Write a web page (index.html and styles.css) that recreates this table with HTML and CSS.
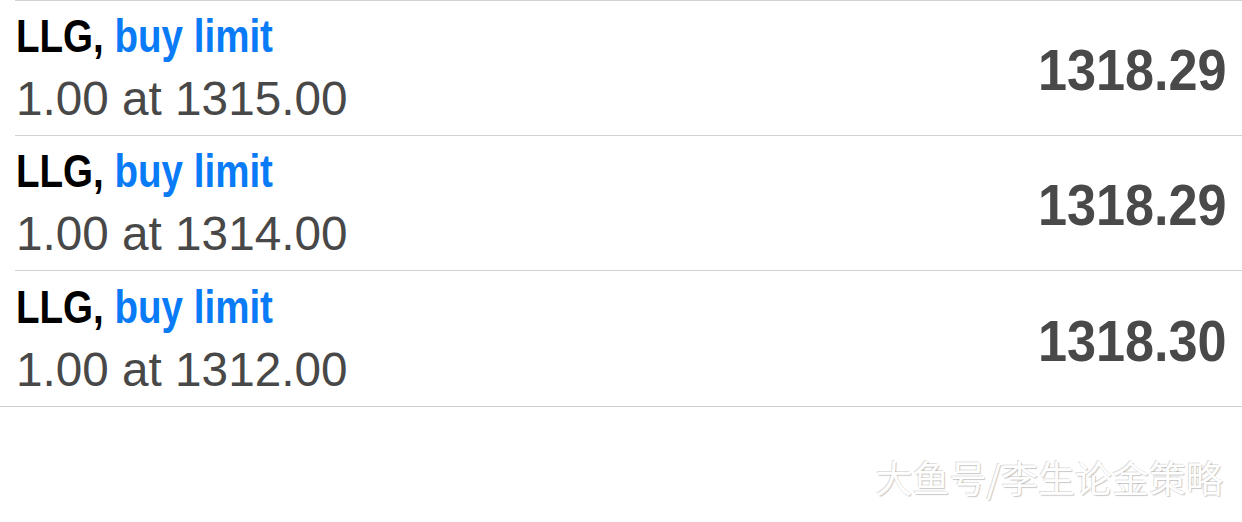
FILE: index.html
```html
<!DOCTYPE html>
<html lang="en">
<head>
<meta charset="utf-8">
<title>Orders</title>
<link rel="stylesheet" href="styles.css">
</head>
<body>
<div class="list">
  <div class="row">
    <div class="info">
      <div class="title"><span class="sym">LLG,</span> <span class="type">buy limit</span></div>
      <div class="detail">1.00 at 1315.00</div>
    </div>
    <div class="price"><span class="num">1318.29</span></div>
  </div>
  <div class="row">
    <div class="info">
      <div class="title"><span class="sym">LLG,</span> <span class="type">buy limit</span></div>
      <div class="detail">1.00 at 1314.00</div>
    </div>
    <div class="price"><span class="num">1318.29</span></div>
  </div>
  <div class="row last">
    <div class="info">
      <div class="title"><span class="sym">LLG,</span> <span class="type">buy limit</span></div>
      <div class="detail">1.00 at 1312.00</div>
    </div>
    <div class="price"><span class="num">1318.30</span></div>
  </div>
</div>
<div class="watermark">大鱼号/李生论金策略</div>
</body>
</html>
```

FILE: styles.css
```css
html, body {
  margin: 0;
  padding: 0;
  background: #ffffff;
}
body {
  width: 1242px;
  height: 522px;
  overflow: hidden;
  font-family: "Liberation Sans", Arial, sans-serif;
}
.list {
  display: flex;
  flex-direction: column;
  border-bottom: 1px solid #cfcfcf;
}
.row {
  display: flex;
  justify-content: space-between;
  align-items: center;
  height: 134px;
  margin-left: 15px;
  border-top: 1px solid #d2d2d2;
}
.row.last {
  height: 135px;
}
.info {
  display: flex;
  flex-direction: column;
  align-items: flex-start;
  padding-left: 1px;
  align-self: flex-start;
  padding-top: 3px;
}
.row.last .info {
  padding-top: 4px;
}
.title {
  display: inline-block;
  font-weight: bold;
  font-size: 47px;
  line-height: 63px;
  white-space: nowrap;
  transform: scaleX(0.82);
  transform-origin: left center;
}
.sym { color: #000000; }
.type { color: #0a7bf6; }
.detail {
  font-size: 47.7px;
  line-height: 63px;
  color: #484848;
  white-space: nowrap;
}
.price {
  padding-right: 15px;
  padding-top: 4px;
}
.num {
  display: inline-block;
  font-weight: bold;
  font-size: 58px;
  line-height: 58px;
  color: #494949;
  transform: scaleX(0.9);
  transform-origin: right center;
}
.watermark {
  text-align: right;
  padding-right: 19px;
  margin-top: 50px;
  font-family: "Noto Sans CJK SC", sans-serif;
  font-size: 37px;
  line-height: 40px;
  color: #ffffff;
  text-shadow: -1px -1px 0 rgba(0,0,0,0.15), 1px 1px 1px rgba(0,0,0,0.22);
}
```
